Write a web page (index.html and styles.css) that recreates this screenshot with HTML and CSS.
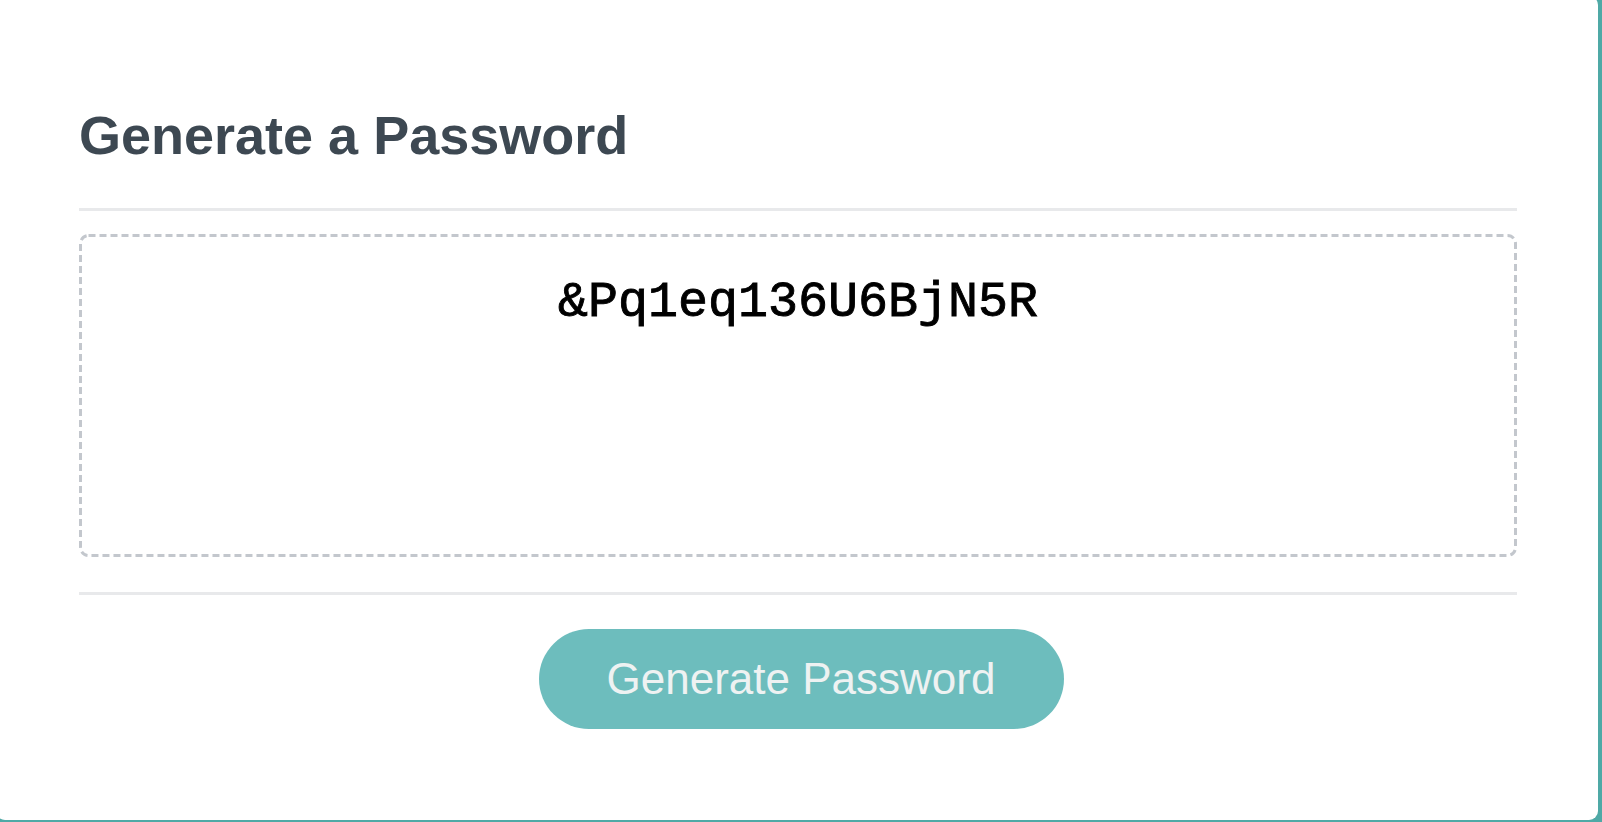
FILE: index.html
```html
<!DOCTYPE html>
<html lang="en">
<head>
<meta charset="utf-8">
<title>Password Generator</title>
<link rel="stylesheet" href="styles.css">
</head>
<body>
  <div class="card">
    <h1 class="card-title">Generate a Password</h1>
    <div class="divider"></div>
    <div class="password-box">
      <svg class="password-frame" width="1438" height="323" viewBox="0 0 1438 323" aria-hidden="true">
        <rect x="1.5" y="1.5" width="1435" height="320" rx="8" ry="8" fill="none" stroke="#c3c7cd" stroke-width="3" stroke-dasharray="7 4"/>
      </svg>
      <div class="password-text">&amp;Pq1eq136U6BjN5R</div>
    </div>
    <div class="divider divider-bottom"></div>
    <div class="actions">
      <button class="generate-btn" type="button">Generate Password</button>
    </div>
  </div>
</body>
</html>
```
FILE: styles.css
```css
html, body {
  margin: 0;
  padding: 0;
}

body {
  background: #4fa9a6;
  width: 1602px;
  height: 822px;
  overflow: hidden;
  font-family: "Liberation Sans", Arial, sans-serif;
}

.card {
  box-sizing: border-box;
  width: 1602px;
  height: 824px;
  margin: -4px 0 0 -4px;
  background: #ffffff;
  border-radius: 9px;
  padding: 107px 81px 0 83px;
}

.card-title {
  margin: 0;
  font-size: 54px;
  line-height: 64px;
  font-weight: 700;
  color: #3d4852;
}

.divider {
  height: 3px;
  background: #e8e9eb;
  margin-top: 41px;
}

.password-box {
  position: relative;
  box-sizing: border-box;
  margin-top: 23px;
  height: 323px;
  padding-top: 39px;
}

.password-frame {
  position: absolute;
  left: 0;
  top: 0;
  display: block;
}

.password-text {
  position: relative;
  font-family: "Liberation Mono", "Courier New", monospace;
  font-size: 50px;
  line-height: 60px;
  font-weight: 400;
  -webkit-text-stroke: 0.9px #000000;
  color: #000000;
  text-align: center;
}

.divider-bottom {
  margin-top: 35px;
}

.actions {
  display: flex;
  justify-content: center;
  margin-top: 34px;
  padding-left: 6px;
}

.generate-btn {
  width: 525px;
  height: 100px;
  border: none;
  border-radius: 50px;
  background: #6dbdbd;
  color: #eef2f2;
  font-family: "Liberation Sans", Arial, sans-serif;
  font-size: 44px;
  line-height: 1;
  padding: 0;
  cursor: pointer;
}
```
